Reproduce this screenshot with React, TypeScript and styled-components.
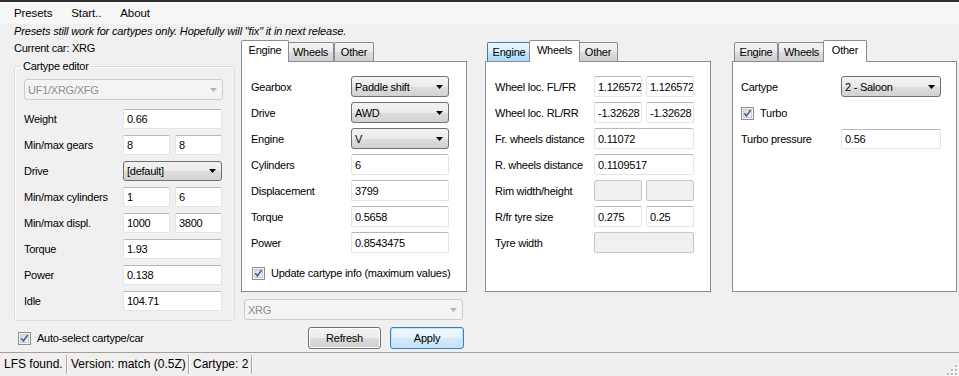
import styled, { createGlobalStyle } from 'styled-components';

const GlobalStyle = createGlobalStyle`
  body {
    margin: 0;
    background: #f0f0f0;
    font-family: "Liberation Sans", Arial, sans-serif;
    font-size: 11px;
    letter-spacing: -0.25px;
    color: #000;
  }
`;

function CheckBox() {
  return (
    <svg width="13" height="13" viewBox="0 0 13 13">
      <defs>
        <linearGradient id="cbfill" x1="0" y1="0" x2="1" y2="1">
          <stop offset="0" stopColor="#d3d7dd" />
          <stop offset="1" stopColor="#f8f8f8" />
        </linearGradient>
      </defs>
      <rect x="0.5" y="0.5" width="12" height="12" fill="#f4f4f4" stroke="#8e8f8f" />
      <rect x="2.5" y="2.5" width="8" height="8" fill="url(#cbfill)" stroke="#c8ccd2" />
      <path d="M3.3 6.2 L5.4 8.9 L9.7 3.1" fill="none" stroke="#4a5e9c" strokeWidth="1.6" />
    </svg>
  );
}

function Arrow({ disabled }: { disabled?: boolean }) {
  return (
    <svg width="7" height="4" viewBox="0 0 7 4">
      <path d="M0 0H7L3.5 4Z" fill={disabled ? '#b4b4b4' : '#000'} />
    </svg>
  );
}

function Dropdown({ value, disabled }: { value: string; disabled?: boolean }) {
  return (
    <Combo $disabled={disabled}>
      <span>{value}</span>
      <Arrow disabled={disabled} />
    </Combo>
  );
}

function Check({ label }: { label: string }) {
  return (
    <CheckRow>
      <CheckBox />
      <span>{label}</span>
    </CheckRow>
  );
}

function SizeGrip() {
  const dots = [
    [9, 1],
    [5, 5],
    [9, 5],
    [1, 9],
    [5, 9],
    [9, 9],
  ];
  return (
    <Grip width="12" height="12" viewBox="0 0 12 12">
      {dots.map(([x, y]) => (
        <g key={`${x}-${y}`}>
          <rect x={x + 1} y={y + 1} width="2" height="2" fill="#fff" />
          <rect x={x} y={y} width="2" height="2" fill="#b9b9b9" />
        </g>
      ))}
    </Grip>
  );
}

type TabName = 'Engine' | 'Wheels' | 'Other';
const tabWidths: Record<TabName, number> = { Engine: 44, Wheels: 47, Other: 40 };

function Tabs({ active, hover }: { active: TabName; hover?: TabName }) {
  return (
    <TabStrip>
      {(['Engine', 'Wheels', 'Other'] as TabName[]).map((t) => (
        <Tab key={t} $width={tabWidths[t]} $active={t === active} $hover={t === hover}>
          {t}
        </Tab>
      ))}
    </TabStrip>
  );
}

function App() {
  return (
    <>
      <GlobalStyle />
      <Window>
        <MenuBar>
          <MenuItem>Presets</MenuItem>
          <MenuItem>Start..</MenuItem>
          <MenuItem>About</MenuItem>
        </MenuBar>

        <Body>
          <Note>Presets still work for cartypes only. Hopefully will "fix" it in next release.</Note>
          <Main>
            <LeftColumn>
              <CurrentCar>Current car: XRG</CurrentCar>
              <GroupBox>
                <Legend>Cartype editor</Legend>
                <Dropdown value="UF1/XRG/XFG" disabled />
                <FieldList $gap={6} $top={9}>
                  <Row $label={99} $control={99} $height={20}>
                    <span>Weight</span>
                    <TextBox>0.66</TextBox>
                  </Row>
                  <Row $label={99} $control={99} $height={20}>
                    <span>Min/max gears</span>
                    <Pair $gap={5}>
                      <TextBox>8</TextBox>
                      <TextBox>8</TextBox>
                    </Pair>
                  </Row>
                  <Row $label={99} $control={99} $height={20}>
                    <span>Drive</span>
                    <Dropdown value="[default]" />
                  </Row>
                  <Row $label={99} $control={99} $height={20}>
                    <span>Min/max cylinders</span>
                    <Pair $gap={5}>
                      <TextBox>1</TextBox>
                      <TextBox>6</TextBox>
                    </Pair>
                  </Row>
                  <Row $label={99} $control={99} $height={20}>
                    <span>Min/max displ.</span>
                    <Pair $gap={5}>
                      <TextBox>1000</TextBox>
                      <TextBox>3800</TextBox>
                    </Pair>
                  </Row>
                  <Row $label={99} $control={99} $height={20}>
                    <span>Torque</span>
                    <TextBox>1.93</TextBox>
                  </Row>
                  <Row $label={99} $control={99} $height={20}>
                    <span>Power</span>
                    <TextBox>0.138</TextBox>
                  </Row>
                  <Row $label={99} $control={99} $height={20}>
                    <span>Idle</span>
                    <TextBox>104.71</TextBox>
                  </Row>
                </FieldList>
              </GroupBox>
              <AutoSelect>
                <Check label="Auto-select cartype/car" />
              </AutoSelect>
            </LeftColumn>

            <RightArea>
              <TabsRow>
                <TabControl $width={226} $offset={0}>
                  <Tabs active="Engine" />
                  <Panel $pad={9}>
                    <FieldList $gap={5} $top={0}>
                      <Row $label={100} $control={98} $height={21}>
                        <span>Gearbox</span>
                        <Dropdown value="Paddle shift" />
                      </Row>
                      <Row $label={100} $control={98} $height={21}>
                        <span>Drive</span>
                        <Dropdown value="AWD" />
                      </Row>
                      <Row $label={100} $control={98} $height={21}>
                        <span>Engine</span>
                        <Dropdown value="V" />
                      </Row>
                      <Row $label={100} $control={98} $height={21}>
                        <span>Cylinders</span>
                        <TextBox>6</TextBox>
                      </Row>
                      <Row $label={100} $control={98} $height={21}>
                        <span>Displacement</span>
                        <TextBox>3799</TextBox>
                      </Row>
                      <Row $label={100} $control={98} $height={21}>
                        <span>Torque</span>
                        <TextBox>0.5658</TextBox>
                      </Row>
                      <Row $label={100} $control={98} $height={21}>
                        <span>Power</span>
                        <TextBox>0.8543475</TextBox>
                      </Row>
                    </FieldList>
                    <UpdateInfo>
                      <Check label="Update cartype info (maximum values)" />
                    </UpdateInfo>
                  </Panel>
                </TabControl>

                <TabControl $width={226} $offset={18}>
                  <Tabs active="Wheels" hover="Engine" />
                  <Panel $pad={9}>
                    <FieldList $gap={5} $top={0}>
                      <Row $label={99} $control={100} $height={21}>
                        <span>Wheel loc. FL/FR</span>
                        <Pair $gap={4}>
                          <TextBox>1.126572</TextBox>
                          <TextBox>1.126572</TextBox>
                        </Pair>
                      </Row>
                      <Row $label={99} $control={100} $height={21}>
                        <span>Wheel loc. RL/RR</span>
                        <Pair $gap={4}>
                          <TextBox>-1.32628</TextBox>
                          <TextBox>-1.32628</TextBox>
                        </Pair>
                      </Row>
                      <Row $label={99} $control={100} $height={21}>
                        <span>Fr. wheels distance</span>
                        <TextBox>0.11072</TextBox>
                      </Row>
                      <Row $label={99} $control={100} $height={21}>
                        <span>R. wheels distance</span>
                        <TextBox>0.1109517</TextBox>
                      </Row>
                      <Row $label={99} $control={100} $height={21}>
                        <span>Rim width/height</span>
                        <Pair $gap={4}>
                          <TextBox $disabled />
                          <TextBox $disabled />
                        </Pair>
                      </Row>
                      <Row $label={99} $control={100} $height={21}>
                        <span>R/fr tyre size</span>
                        <Pair $gap={4}>
                          <TextBox>0.275</TextBox>
                          <TextBox>0.25</TextBox>
                        </Pair>
                      </Row>
                      <Row $label={99} $control={100} $height={21}>
                        <span>Tyre width</span>
                        <TextBox $disabled />
                      </Row>
                    </FieldList>
                  </Panel>
                </TabControl>

                <TabControl $width={225} $offset={21}>
                  <Tabs active="Other" />
                  <Panel $pad={8}>
                    <FieldList $gap={5} $top={0}>
                      <Row $label={100} $control={100} $height={21}>
                        <span>Cartype</span>
                        <Dropdown value="2 - Saloon" />
                      </Row>
                      <TurboRow>
                        <Check label="Turbo" />
                      </TurboRow>
                      <Row $label={100} $control={100} $height={20}>
                        <span>Turbo pressure</span>
                        <TextBox>0.56</TextBox>
                      </Row>
                    </FieldList>
                  </Panel>
                </TabControl>
              </TabsRow>

              <BelowTabs>
                <CarSelect>
                  <Dropdown value="XRG" disabled />
                </CarSelect>
                <ButtonRow>
                  <Button $width={73}>Refresh</Button>
                  <Button $width={74} $default>
                    Apply
                  </Button>
                </ButtonRow>
              </BelowTabs>
            </RightArea>
          </Main>
        </Body>

        <StatusBar>
          <StatusPanel $width={67}>LFS found.</StatusPanel>
          <StatusPanel $width={122}>Version: match (0.5Z)</StatusPanel>
          <StatusPanel $width={63}>Cartype: 2</StatusPanel>
          <SizeGrip />
        </StatusBar>
      </Window>
    </>
  );
}

export default App;

const Window = styled.div`
  width: 959px;
  height: 376px;
  box-sizing: border-box;
  border-top: 2px solid #2f2f2f;
  display: flex;
  flex-direction: column;
  overflow: hidden;
  background: #f0f0f0;
`;

const MenuBar = styled.div`
  height: 22px;
  flex-shrink: 0;
  display: flex;
  align-items: center;
  gap: 19px;
  padding-left: 14px;
  background: #f7f7f7;
`;

const MenuItem = styled.span`
  font-size: 11.5px;
  letter-spacing: -0.1px;
`;

const Body = styled.div`
  flex: 1;
  display: flex;
  flex-direction: column;
  padding-left: 14px;
`;

const Note = styled.div`
  height: 16px;
  line-height: 14px;
  font-size: 11px;
  letter-spacing: -0.15px;
  font-style: italic;
  white-space: nowrap;
`;

const Main = styled.div`
  display: flex;
  align-items: flex-start;
`;

const LeftColumn = styled.div`
  width: 221px;
  display: flex;
  flex-direction: column;
`;

const CurrentCar = styled.div`
  height: 16px;
  line-height: 17px;
`;

const GroupBox = styled.fieldset`
  margin: 3px 0 0;
  padding: 6px 11px 9px 9px;
  width: 221px;
  min-width: 0;
  box-sizing: border-box;
  border: 1px solid #d5dfe5;
  border-radius: 3px;
  box-shadow: inset 1px 1px 0 #fff;
`;

const Legend = styled.legend`
  padding: 0 2px;
  margin-left: -3px;
  line-height: 14px;
`;

const FieldList = styled.div<{ $gap: number; $top: number }>`
  display: flex;
  flex-direction: column;
  gap: ${(p) => p.$gap}px;
  margin-top: ${(p) => p.$top}px;
`;

const Row = styled.div<{ $label: number; $control: number; $height: number }>`
  display: grid;
  grid-template-columns: ${(p) => p.$label}px ${(p) => p.$control}px;
  align-items: stretch;
  height: ${(p) => p.$height}px;
  white-space: nowrap;

  & > span {
    align-self: center;
  }
`;

const Pair = styled.div<{ $gap: number }>`
  display: grid;
  grid-template-columns: 1fr 1fr;
  gap: ${(p) => p.$gap}px;
`;

const TextBox = styled.div<{ $disabled?: boolean }>`
  box-sizing: border-box;
  height: 100%;
  display: flex;
  align-items: center;
  padding: 0 3px;
  overflow: hidden;
  white-space: nowrap;
  border: 1px solid #e1e4e9;
  border-top-color: #b5b8bf;
  border-radius: 2px;
  background: ${(p) => (p.$disabled ? '#f0f0f0' : '#fff')};
  ${(p) => p.$disabled && 'border-color: #c6c6c6;'}
`;

const Combo = styled.div<{ $disabled?: boolean }>`
  box-sizing: border-box;
  height: ${(p) => (p.$disabled ? '21px' : '100%')};
  display: flex;
  align-items: center;
  justify-content: space-between;
  padding: 0 5px 0 3px;
  border-radius: 3px;
  white-space: nowrap;
  border: 1px solid ${(p) => (p.$disabled ? '#cdcdcd' : '#707070')};
  color: ${(p) => (p.$disabled ? '#8d8d8d' : '#000')};
  background: ${(p) =>
    p.$disabled ? '#f4f4f4' : 'linear-gradient(#f3f3f3 0%, #ebebeb 50%, #dddddd 51%, #d2d2d2 100%)'};
`;

const CheckRow = styled.div`
  display: flex;
  align-items: center;
  gap: 6px;
  white-space: nowrap;
`;

const AutoSelect = styled.div`
  height: 16px;
  display: flex;
  align-items: center;
  margin: 9px 0 0 4px;
`;

const UpdateInfo = styled.div`
  height: 16px;
  display: flex;
  align-items: center;
  margin: 12px 0 0 1px;
`;

const TurboRow = styled.div`
  height: 22px;
  display: flex;
  align-items: center;
`;

const RightArea = styled.div`
  margin-left: 6px;
  display: flex;
  flex-direction: column;
`;

const TabsRow = styled.div`
  display: flex;
  align-items: flex-start;
`;

const TabControl = styled.div<{ $width: number; $offset: number }>`
  width: ${(p) => p.$width}px;
  margin-left: ${(p) => p.$offset}px;
  display: flex;
  flex-direction: column;
`;

const TabStrip = styled.div`
  height: 21px;
  display: flex;
  align-items: flex-end;
  padding-left: 2px;
`;

const Tab = styled.div<{ $width: number; $active?: boolean; $hover?: boolean }>`
  position: relative;
  z-index: ${(p) => (p.$active ? 1 : 0)};
  box-sizing: border-box;
  width: ${(p) => (p.$active ? p.$width + 4 : p.$width)}px;
  height: ${(p) => (p.$active ? 22 : 19)}px;
  margin: ${(p) => (p.$active ? '0 -2px -1px' : '0')};
  padding-bottom: ${(p) => (p.$active ? 3 : 0)}px;
  display: flex;
  align-items: center;
  justify-content: center;
  border: 1px solid ${(p) => (p.$hover ? '#3c7fb1' : '#898c95')};
  border-bottom: none;
  border-radius: 2px 2px 0 0;
  background: ${(p) =>
    p.$active
      ? '#fff'
      : p.$hover
      ? 'linear-gradient(#eaf6fd 0%, #d9f0fc 50%, #bee6fd 51%, #a7d9f5 100%)'
      : 'linear-gradient(#f3f3f3 0%, #ebebeb 50%, #dddddd 51%, #cfcfcf 100%)'};
`;

const Panel = styled.div<{ $pad: number }>`
  box-sizing: border-box;
  height: 231px;
  padding: 14px 0 0 ${(p) => p.$pad}px;
  border: 1px solid #898c95;
  background: #fff;
`;

const BelowTabs = styled.div`
  width: 226px;
  display: flex;
  flex-direction: column;
`;

const CarSelect = styled.div`
  margin: 7px 0 0 3px;
  width: 219px;
`;

const ButtonRow = styled.div`
  margin-top: 7px;
  padding-right: 3px;
  display: flex;
  justify-content: flex-end;
  gap: 9px;
`;

const Button = styled.div<{ $width: number; $default?: boolean }>`
  box-sizing: border-box;
  width: ${(p) => p.$width}px;
  height: 22px;
  display: flex;
  align-items: center;
  justify-content: center;
  border-radius: 3px;
  border: 1px solid ${(p) => (p.$default ? '#3c7fb1' : '#707070')};
  box-shadow: inset 0 0 0 1px ${(p) => (p.$default ? '#bfe3f8' : '#fcfcfc')};
  background: ${(p) =>
    p.$default
      ? 'linear-gradient(#f1f8fd 0%, #e3f1fb 50%, #d3eaf8 51%, #c4e2f5 100%)'
      : 'linear-gradient(#f2f2f2 0%, #ebebeb 50%, #dddddd 51%, #cfcfcf 100%)'};
`;

const StatusBar = styled.div`
  height: 24px;
  flex-shrink: 0;
  box-sizing: border-box;
  border-top: 1px solid #a0a0a0;
  padding: 2px 0 0;
  display: flex;
  align-items: flex-start;
  background: #f1eeee;
  font-size: 12px;
  letter-spacing: 0;
`;

const StatusPanel = styled.div<{ $width: number }>`
  box-sizing: border-box;
  width: ${(p) => p.$width}px;
  height: 19px;
  line-height: 19px;
  padding-left: 4px;
  white-space: nowrap;
  border-right: 1px solid #a9a9a9;
  box-shadow: 1px 0 0 #fff;
`;

const Grip = styled.svg`
  margin-left: auto;
  align-self: flex-end;
  margin-right: 1px;
`;
